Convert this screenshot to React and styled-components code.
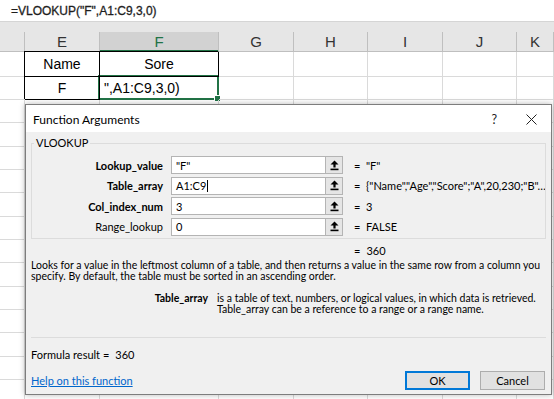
import styled, { createGlobalStyle } from "styled-components";

const GlobalStyle = createGlobalStyle`
  html, body {
    margin: 0;
    padding: 0;
    background: #ffffff;
    overflow: hidden;
  }
`;

const COLS = [25, 75, 119, 75, 74, 75, 74, 37];
const HEADERS = ["", "E", "F", "G", "H", "I", "J", "K"];

const sheetFont = `"Liberation Sans", Arial, sans-serif`;
const uiFont = `Lato, "Noto Sans", sans-serif`;

const Screen = styled.div`
  position: relative;
  width: 554px;
  height: 399px;
  overflow: hidden;
  font-family: ${sheetFont};
`;

const FormulaBar = styled.div`
  height: 21px;
  border-bottom: 1px solid #d5d5d5;
  display: flex;
  align-items: center;
  padding-left: 11px;
  font-size: 12px;
  color: #1e1e1e;
  -webkit-text-stroke: 0.3px #1e1e1e;
`;

const Band = styled.div`
  height: 10px;
  background: #e6e6e6;
`;

const SheetGrid = styled.div`
  display: grid;
  grid-template-columns: ${COLS.map((c) => c + "px").join(" ")};
  grid-template-rows: 20px 25px 23px;
  grid-auto-rows: 23.33px;
`;

const HeaderCell = styled.div`
  background: ${(p) => (p.$active ? "#d2d2d2" : "#e6e6e6")};
  border-right: 1px solid #bfbfbf;
  border-bottom: 1px solid ${(p) => (p.$active ? "#217346" : "#bfbfbf")};
  box-shadow: ${(p) => (p.$active ? "inset 0 -1px 0 #217346" : "none")};
  color: ${(p) => (p.$active ? "#217346" : "#333")};
  font-size: 15px;
  display: flex;
  align-items: center;
  justify-content: center;
  white-space: nowrap;
  overflow: hidden;
`;

const Cell = styled.div`
  position: relative;
  border-right: 1px solid ${(p) => (p.$boxed ? "#000" : "#dadada")};
  border-bottom: 1px solid ${(p) => (p.$boxed ? "#000" : "#dadada")};
  box-shadow: ${(p) => (p.$boxed ? "-1px -1px 0 0 #000" : "none")};
  z-index: ${(p) => (p.$boxed ? 1 : 0)};
  font-size: 14px;
  color: #000;
  display: flex;
  align-items: center;
  justify-content: ${(p) => (p.$left ? "flex-start" : "center")};
  padding-left: ${(p) => (p.$left ? "4px" : "0")};
  white-space: nowrap;

  ${(p) =>
    p.$selected &&
    `
    &::after {
      content: "";
      position: absolute;
      left: -2px;
      top: -2px;
      right: -1px;
      bottom: -1px;
      border: 2px solid #217346;
      z-index: 2;
    }
    &::before {
      content: "";
      position: absolute;
      right: -3px;
      bottom: -3px;
      width: 5px;
      height: 5px;
      background: #217346;
      border: 1px solid #fff;
      z-index: 3;
    }
  `}
`;

const Dialog = styled.div`
  position: absolute;
  left: 25px;
  top: 104px;
  width: 527px;
  height: 291px;
  box-sizing: border-box;
  border: 1px solid #7d7d7d;
  background: #f0f0f0;
  box-shadow: 0 0 6px rgba(0, 0, 0, 0.28);
  z-index: 10;
  font-family: ${uiFont};
  font-size: 11px;
  color: #000;
  display: flex;
  flex-direction: column;
  overflow: hidden;
`;

const TitleBar = styled.div`
  flex-shrink: 0;
  height: 27px;
  background: #fff;
  display: flex;
  align-items: center;
  justify-content: space-between;
  padding: 1px 14px 0 7px;
  box-sizing: border-box;
`;

const Title = styled.span`
  font-size: 12px;
`;

const TitleIcons = styled.div`
  display: flex;
  align-items: center;
  gap: 29px;
`;

const HelpMark = styled.span`
  font-size: 12.5px;
  color: #222;
`;

const Body = styled.div`
  flex: 1;
  padding: 0 5px 4px 5px;
  display: flex;
  flex-direction: column;
`;

const Group = styled.fieldset`
  margin: 4px 0 0 0;
  padding: 6px 0 2px 0;
  border: 1px solid #dcdcdc;
  min-width: 0;
`;

const Legend = styled.legend`
  line-height: 14px;
  padding: 0 2px;
  margin-left: 2px;
  font-size: 11px;
`;

const ArgGrid = styled.div`
  display: grid;
  grid-template-columns: 139px 154px 18px 23px 1fr;
  grid-auto-rows: 18px;
  row-gap: 2.67px;
  align-items: center;
`;

const ArgLabel = styled.div`
  text-align: right;
  padding-right: 8px;
  font-weight: ${(p) => (p.$bold ? 700 : 400)};
  white-space: nowrap;
`;

const ArgInput = styled.div`
  height: 18px;
  box-sizing: border-box;
  background: #fff;
  border: 1px solid #b4b4b4;
  border-right: none;
  display: flex;
  align-items: center;
  padding-left: 4px;
  white-space: nowrap;
`;

const Caret = styled.span`
  display: inline-block;
  width: 1px;
  height: 12px;
  background: #000;
  margin-left: 1px;
`;

const CollapseBtn = styled.div`
  height: 18px;
  box-sizing: border-box;
  background: #e5e5e5;
  border: 1px solid #b4b4b4;
  display: flex;
  align-items: center;
  justify-content: center;
`;

const Eq = styled.div`
  padding-left: 11px;
`;

const ArgValue = styled.div`
  white-space: nowrap;
  overflow: hidden;
`;

const ResultLine = styled.div`
  margin-top: 6px;
  line-height: 12px;
  padding-left: 323px;
  display: flex;
  gap: 6px;
`;

const Description = styled.div`
  margin-top: 3px;
  line-height: 11.5px;
  font-size: 10.5px;
`;

const ParamHelp = styled.div`
  margin-top: 10px;
  display: grid;
  grid-template-columns: 177px 1fr;
  column-gap: 9px;
  line-height: 11.5px;
  font-size: 10.5px;
`;

const ParamName = styled.div`
  text-align: right;
  font-weight: 700;
`;

const Divider = styled.div`
  margin-top: 21px;
  height: 1px;
  background: #dcdcdc;
`;

const FormulaResult = styled.div`
  margin-top: 11px;
  line-height: 12px;
  display: flex;
  gap: 6px;
`;

const Footer = styled.div`
  margin-top: 10px;
  display: flex;
  align-items: center;
  justify-content: space-between;
  padding-right: 1px;
`;

const HelpLink = styled.a`
  color: #0066cc;
  text-decoration: underline;
  cursor: pointer;
`;

const Buttons = styled.div`
  display: flex;
  gap: 10px;
`;

const DlgButton = styled.button`
  width: 65px;
  height: 19px;
  box-sizing: border-box;
  padding: 0;
  font-family: ${uiFont};
  font-size: 11px;
  color: #000;
  background: #e1e1e1;
  border: 1px solid ${(p) => (p.$primary ? "#0078d7" : "#adadad")};
  box-shadow: ${(p) => (p.$primary ? "inset 0 0 0 1px #0078d7" : "none")};
`;

const UpIcon = () => (
  <svg width="9" height="11" viewBox="0 0 9 11">
    <path d="M4.5 0.5 L8.5 4.5 H5.6 V7.5 H3.4 V4.5 H0.5 Z" fill="#000" />
    <rect x="0.5" y="8.6" width="8" height="1.6" fill="#000" />
  </svg>
);

const CloseIcon = () => (
  <svg width="11" height="11" viewBox="0 0 11 11">
    <path d="M0.5 0.5 L10.5 10.5 M10.5 0.5 L0.5 10.5" stroke="#222" strokeWidth="1" />
  </svg>
);

const ARGS = [
  { label: "Lookup_value", bold: true, input: '"F"', value: '"F"' },
  { label: "Table_array", bold: true, input: "A1:C9", caret: true, value: '{"Name","Age","Score";"A",20,230;"B"…' },
  { label: "Col_index_num", bold: true, input: "3", value: "3" },
  { label: "Range_lookup", bold: false, input: "0", value: "FALSE" },
];

const ROWS = [
  { 1: { text: "Name", boxed: true }, 2: { text: "Sore", boxed: true } },
  { 1: { text: "F", boxed: true }, 2: { text: '",A1:C9,3,0)', left: true, selected: true } },
];
for (let i = 0; i < 13; i++) ROWS.push({});

export default function App() {
  return (
    <Screen>
      <GlobalStyle />
      <FormulaBar>=VLOOKUP("F",A1:C9,3,0)</FormulaBar>
      <Band />
      <SheetGrid>
        {HEADERS.map((h, i) => (
          <HeaderCell key={"h" + i} $active={h === "F"}>
            {h}
          </HeaderCell>
        ))}
        {ROWS.map((row, r) =>
          COLS.map((_, c) => {
            const cell = row[c] || {};
            return (
              <Cell
                key={r + "-" + c}
                $boxed={cell.boxed}
                $left={cell.left}
                $selected={cell.selected}
              >
                {cell.text}
              </Cell>
            );
          })
        )}
      </SheetGrid>

      <Dialog>
        <TitleBar>
          <Title>Function Arguments</Title>
          <TitleIcons>
            <HelpMark>?</HelpMark>
            <CloseIcon />
          </TitleIcons>
        </TitleBar>
        <Body>
          <Group>
            <Legend>VLOOKUP</Legend>
            <ArgGrid>
              {ARGS.map((a) => [
                <ArgLabel key={a.label + "l"} $bold={a.bold}>{a.label}</ArgLabel>,
                <ArgInput key={a.label + "i"}>
                  {a.input}
                  {a.caret && <Caret />}
                </ArgInput>,
                <CollapseBtn key={a.label + "b"}>
                  <UpIcon />
                </CollapseBtn>,
                <Eq key={a.label + "e"}>=</Eq>,
                <ArgValue key={a.label + "v"}>{a.value}</ArgValue>,
              ])}
            </ArgGrid>
          </Group>
          <ResultLine>
            <span>=</span>
            <span>360</span>
          </ResultLine>
          <Description>
            Looks for a value in the leftmost column of a table, and then returns a value in the same row from a column you
            specify. By default, the table must be sorted in an ascending order.
          </Description>
          <ParamHelp>
            <ParamName>Table_array</ParamName>
            <div>
              is a table of text, numbers, or logical values, in which data is retrieved.
              <br />
              Table_array can be a reference to a range or a range name.
            </div>
          </ParamHelp>
          <Divider />
          <FormulaResult>
            <span>Formula result =</span>
            <span>360</span>
          </FormulaResult>
          <Footer>
            <HelpLink>Help on this function</HelpLink>
            <Buttons>
              <DlgButton $primary>OK</DlgButton>
              <DlgButton>Cancel</DlgButton>
            </Buttons>
          </Footer>
        </Body>
      </Dialog>
    </Screen>
  );
}
